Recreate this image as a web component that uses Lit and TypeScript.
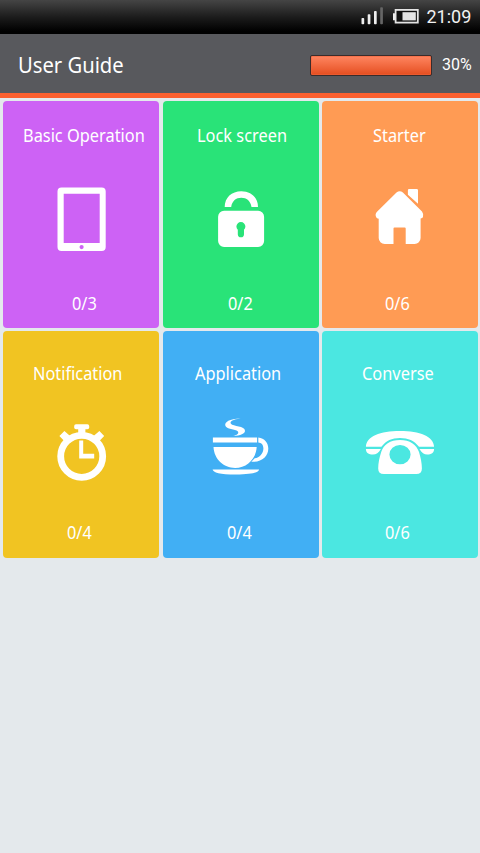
import { LitElement, html, svg, css } from "lit";
import { customElement } from "lit/decorators.js";

const tablet = svg`<path fill-rule="evenodd" d="M61.3 187.5h40.2a4 4 0 0 1 4 4v55.5a4 4 0 0 1-4 4H61.3a4 4 0 0 1-4-4v-55.5a4 4 0 0 1 4-4zM63.5 193.7V243h36v-49.3zM79.3 247.1a2.1 2.1 0 1 0 4.2 0a2.1 2.1 0 1 0-4.2 0z"/>`;

const lock = svg`<path d="M224.6 207C224.6 197.500 231.500 191.200 241.200 191.200S257.900 197.500 257.900 207H251.400C250.500 201 246.500 197.800 241.200 197.800S232 201 231.100 207z"/>
  <path fill-rule="evenodd" d="M224 210.700h34a6 6 0 0 1 6 6V241a6 6 0 0 1-6 6h-34a6 6 0 0 1-6-6v-24.300a6 6 0 0 1 6-6zM237.700 229.800V234.200a3.100 3.100 0 0 0 6.200 0V229.800a4.500 4.500 0 1 0-6.200 0z"/>`;

const house = svg`<path d="M396.300 192.600Q399.500 189.800 402.700 192.600L421.800 211.600Q423.600 214 422.800 217Q422.300 218.300 420.400 218.500V238a6 6 0 0 1-6 6H405.500V228.500a1 1 0 0 0-1-1H394.300a1 1 0 0 0-1 1V244H384.500a6 6 0 0 1-6-6V218.800Q376.500 218.500 376 217.300Q374.500 214 376.800 211.700z"/>
  <path d="M409.200 189h7.300a1.300 1.300 0 0 1 1.300 1.300V203.800L407.700 194.800V190.300a1.300 1.300 0 0 1 1.500-1.300z"/>`;

const stopwatch = svg`<circle cx="81.500" cy="456.300" r="21" fill="none" stroke="#fff" stroke-width="6.800"/>
  <rect x="74" y="424.200" width="15" height="5" rx="1.800"/>
  <path d="M78 429h7.200v5H78zM59.200 436L64.200 431L70.500 436.500L65 442zM104 436L99.200 431L92.800 436.500L98.200 442zM79 440.500h4v13.300h11v4.800H79z"/>`;

const cup = svg`<path d="M240.500 418.600C229 418.600 224.500 422.500 225.200 425.500C226 429.500 235.500 429 237.600 431.200C239.300 433.500 237 435 233 435.800C240.500 435.800 245 433.500 244.900 430.700C244.800 426 233 426.500 230.800 423.800C229.300 421.500 233 419.500 240.500 418.600z"/>
  <path d="M212.800 437.400H257V442.600H212.800zM213.400 447H256.600C256 459 246.500 467.900 235 467.900S214 459 213.400 447z"/>
  <path d="M258.200 437.600C264.500 438.400 268.200 443 268.200 448.500C268.200 456.500 261.500 462.600 251.200 461.700L254.600 458.300C259.500 457.500 263.300 453.300 263.300 448.400C263.300 444.500 261.300 442.600 258.200 442.400z"/>
  <path d="M212.500 469.400H259C258.500 472.500 252 474.500 235.800 474.500S213 472.500 212.500 469.400z"/>`;

const phone = svg`<path d="M365.700 446.800C366 436.500 380 431 399.800 431S433.500 436.500 433.900 446.800H418.800C414 440.700 408 438 399.800 438S386 440.700 381.200 446.800z"/>
  <path d="M365.700 448.900H380.700C378.500 452.600 376 454.600 372.700 454.600C368.500 454.600 365.700 452.600 365.700 448.900zM433.900 448.900H419.300C421.500 452.600 424 454.600 427 454.600C431 454.600 433.900 452.600 433.900 448.900z"/>
  <path fill-rule="evenodd" d="M399.800 439.900C409.500 439.900 416.500 444.500 418.800 452C420.500 457.500 421.700 463 421.700 468.500Q421.700 474 416 474H383.700Q378 474 378 468.500C378 463 379.200 457.500 381 452C383.300 444.500 390 439.900 399.800 439.900zM389.200 454.600a10.600 9.600 0 1 0 21.200 0a10.600 9.600 0 1 0-21.200 0z"/>`;

const tiles = [
  { cls: "basic", title: "Basic Operation", count: "0/3", box: "2.800 180 156 80", icon: tablet },
  { cls: "lock", title: "Lock screen", count: "0/2", box: "162.900 180 156 80", icon: lock },
  { cls: "starter", title: "Starter", count: "0/6", box: "321.800 180 156 80", icon: house },
  { cls: "notification low", title: "Notification", count: "0/4", box: "2.800 410 156 80", icon: stopwatch },
  { cls: "application low", title: "Application", count: "0/4", box: "162.900 410 156 80", icon: cup },
  { cls: "converse low", title: "Converse", count: "0/6", box: "321.800 410 156 80", icon: phone },
];

@customElement("app-root")
export class AppRoot extends LitElement {
  static styles = css`
    :host {
      display: flex;
      flex-direction: column;
      width: 480px;
      height: 853px;
      overflow: hidden;
      background: #e4e9ec;
      color: #fff;
      font-family: "Noto Sans", "Open Sans", sans-serif;
    }
    * { box-sizing: border-box; }
    svg { display: block; fill: #fff; }
    .status {
      height: 34px;
      flex: none;
      display: flex;
      align-items: center;
      justify-content: flex-end;
      padding-right: 8.500px;
      background: linear-gradient(#454545, #1c1c1c 50%, #000 92%);
    }
    .clock {
      width: 45px;
      margin-left: 7px;
      font: 18px/32px Roboto, sans-serif;
      white-space: nowrap;
      color: #f2f2f2;
    }
    .header {
      height: 64px;
      flex: none;
      display: flex;
      align-items: center;
      justify-content: space-between;
      background: #58595d;
      border-bottom: 5px solid #fb602f;
      padding: 0 8px 0 17.500px;
    }
    .header h1 {
      flex: 1;
      margin: 0;
      font-size: 21.500px;
      line-height: 28px;
      font-weight: 400;
      padding-top: 3px;
      transform: scaleX(.94);
      transform-origin: 0 0;
    }
    .bar {
      width: 122px;
      height: 21px;
      margin-top: 3px;
      border: 1px solid #3a2c2b;
      border-radius: 2px;
      background: linear-gradient(#ff8661, #e54e20);
      box-shadow: inset 0 0 0 1px #f0643a88;
    }
    .percent {
      width: 30px;
      margin-left: 10px;
      padding-top: 3px;
      font: 16px/20px Roboto, sans-serif;
      white-space: nowrap;
    }
    .grid {
      display: grid;
      grid-template-columns: repeat(3, 156px);
      grid-auto-rows: 226.500px;
      gap: 3.500px 3.200px;
      padding: 3.300px 0 0 3.400px;
    }
    .tile {
      display: flex;
      flex-direction: column;
      align-items: flex-start;
      border-radius: 4px;
      padding-top: 22px;
    }
    .tile svg { margin: 32.700px 0 31.500px; }
    .low { padding-top: 30px; }
    .low svg { margin: 24.700px 0 29.700px; }
    .title, .count {
      font-size: 17.500px;
      line-height: 24px;
      white-space: nowrap;
      transform: scaleX(.935);
      transform-origin: 0 0;
    }
    .basic { background: #cd62f5; }
    .lock { background: #29e378; }
    .starter { background: #ff9b54; }
    .notification { background: #f1c422; }
    .application { background: #41aff4; }
    .converse { background: #4be7e1; }
    .basic .title { margin-left: 19.300px; }
    .lock .title { margin-left: 34.300px; }
    .starter .title { margin-left: 51.200px; }
    .notification .title { margin-left: 29.200px; }
    .application .title { margin-left: 32.900px; }
    .converse .title { margin-left: 40.300px; }
    .basic .count { margin-left: 68.700px; }
    .lock .count { margin-left: 65.400px; }
    .starter .count, .converse .count { margin-left: 63.700px; }
    .notification .count { margin-left: 63.700px; }
    .application .count { margin-left: 64.200px; }
  `;

  render() {
    return html`
      <div class="status">
        <svg width="60" height="34" viewBox="360 0 60 34">
          <g fill="#eee">
            <rect x="361.500" y="18" width="2.700" height="6.300" rx=".8"/>
            <rect x="367.700" y="14.300" width="2.700" height="10" rx=".8"/>
            <rect x="374" y="11" width="2.700" height="13.300" rx=".8"/>
            <rect x="380.200" y="7.300" width="2.700" height="17" rx=".8" fill="#666"/>
            <path d="M393 13.300h2v7h-2z"/>
            <rect x="395.600" y="9.900" width="22.200" height="12.700" fill="#111" stroke="#e4e4e4" stroke-width="1.800"/>
            <rect x="402.500" y="12.200" width="13.300" height="8.200" fill="#e4e4e4"/>
          </g>
        </svg>
        <span class="clock">21:09</span>
      </div>
      <div class="header">
        <h1>User Guide</h1>
        <div class="bar"></div>
        <span class="percent">30%</span>
      </div>
      <div class="grid">
        ${tiles.map(
          (t) => html`<div class="tile ${t.cls}">
            <span class="title">${t.title}</span>
            <svg width="156" height="80" viewBox=${t.box}>${t.icon}</svg>
            <span class="count">${t.count}</span>
          </div>`
        )}
      </div>
    `;
  }
}
